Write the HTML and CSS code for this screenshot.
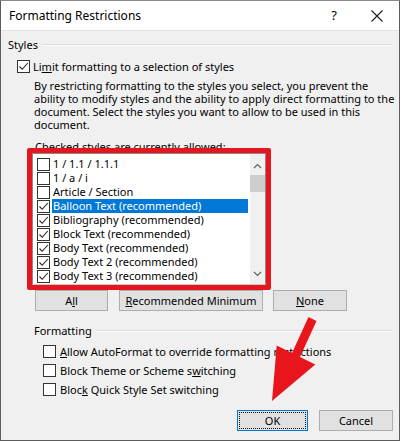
FILE: index.html
```html
<!DOCTYPE html>
<html>
<head>
<meta charset="utf-8">
<title>Formatting Restrictions</title>
<link rel="stylesheet" href="styles.css">
</head>
<body>
<div class="window">
  <div class="titlebar">
    <span class="title">Formatting Restrictions</span>
    <span class="help">?</span>
    <svg class="close" width="12" height="12" viewBox="0 0 12 12"><path d="M0.5 0.5L11.5 11.5M11.5 0.5L0.5 11.5" stroke="#1a1a1a" stroke-width="1.1" fill="none"/></svg>
  </div>
  <div class="content">
    <div class="group-head"><span>Styles</span><i class="rule"></i></div>
    <div class="check-row limit">
      <span class="cb"><svg width="11" height="11" viewBox="0 0 11 11"><path d="M1.5 5.5L4.2 8.3L9.8 2" stroke="#222" stroke-width="1.1" fill="none"/></svg></span>
      <span>Li<u>m</u>it formatting to a selection of styles</span>
    </div>
    <p class="desc">By restricting formatting to the styles you select, you prevent the<br>ability to modify styles and the ability to apply direct formatting to the<br>document. Select the styles you want to allow to be used in this<br>document.</p>
    <div class="list-label">Checked styles are currently allowed:</div>
    <div class="highlight">
      <div class="listbox">
        <ul class="items">
          <li><span class="cb"></span><span class="txt">1 / 1.1 / 1.1.1</span></li>
          <li><span class="cb"></span><span class="txt">1 / a / i</span></li>
          <li><span class="cb"></span><span class="txt">Article / Section</span></li>
          <li class="sel"><span class="cb"><svg width="11" height="11" viewBox="0 0 11 11"><path d="M1.5 5.5L4.2 8.3L9.8 2" stroke="#222" stroke-width="1.1" fill="none"/></svg></span><span class="txt">Balloon Text (recommended)</span></li>
          <li><span class="cb"><svg width="11" height="11" viewBox="0 0 11 11"><path d="M1.5 5.5L4.2 8.3L9.8 2" stroke="#222" stroke-width="1.1" fill="none"/></svg></span><span class="txt">Bibliography (recommended)</span></li>
          <li><span class="cb"><svg width="11" height="11" viewBox="0 0 11 11"><path d="M1.5 5.5L4.2 8.3L9.8 2" stroke="#222" stroke-width="1.1" fill="none"/></svg></span><span class="txt">Block Text (recommended)</span></li>
          <li><span class="cb"><svg width="11" height="11" viewBox="0 0 11 11"><path d="M1.5 5.5L4.2 8.3L9.8 2" stroke="#222" stroke-width="1.1" fill="none"/></svg></span><span class="txt">Body Text (recommended)</span></li>
          <li><span class="cb"><svg width="11" height="11" viewBox="0 0 11 11"><path d="M1.5 5.5L4.2 8.3L9.8 2" stroke="#222" stroke-width="1.1" fill="none"/></svg></span><span class="txt">Body Text 2 (recommended)</span></li>
          <li><span class="cb"><svg width="11" height="11" viewBox="0 0 11 11"><path d="M1.5 5.5L4.2 8.3L9.8 2" stroke="#222" stroke-width="1.1" fill="none"/></svg></span><span class="txt">Body Text 3 (recommended)</span></li>
        </ul>
        <div class="scrollbar">
          <div class="sb-btn up"><svg width="9" height="6" viewBox="0 0 9 6"><path d="M1 5L4.5 1.5L8 5" stroke="#606060" stroke-width="1.2" fill="none"/></svg></div>
          <div class="thumb"></div>
          <div class="track"></div>
          <div class="sb-btn down"><svg width="9" height="6" viewBox="0 0 9 6"><path d="M1 1L4.5 4.5L8 1" stroke="#606060" stroke-width="1.2" fill="none"/></svg></div>
        </div>
      </div>
    </div>
    <div class="btn-row">
      <button class="btn b-all">A<u>l</u>l</button>
      <button class="btn b-rec"><u>R</u>ecommended Minimum</button>
      <button class="btn b-none"><u>N</u>one</button>
    </div>
    <div class="group-head fmt"><span>Formatting</span><i class="rule"></i></div>
    <div class="fmt-rows">
      <div class="check-row"><span class="cb"></span><span><u>A</u>llow AutoFormat to override formatting restrictions</span></div>
      <div class="check-row"><span class="cb"></span><span>Block Theme or Scheme s<u>w</u>itching</span></div>
      <div class="check-row"><span class="cb"></span><span>Bloc<u>k</u> Quick Style Set switching</span></div>
    </div>
    <div class="footer">
      <button class="btn ok">OK</button>
      <button class="btn cancel">Cancel</button>
    </div>
  </div>
  <svg class="arrow" width="401" height="441" viewBox="0 0 401 441"><polygon points="308.5,317 316.5,321 300,357 315.3,364.5 272,401 276.7,345.5 292,353" fill="#e8161c"/></svg>
</div>
</body>
</html>
```

FILE: styles.css
```css
* { box-sizing: border-box; }
html, body { margin: 0; padding: 0; background: #ffffff; }
body {
  width: 401px;
  height: 441px;
  font-family: "Noto Sans", "Open Sans", sans-serif;
  font-size: 11px;
  color: #000;
  overflow: hidden;
}
.window {
  position: relative;
  width: 400px;
  height: 441px;
  border: 1px solid #5c5c5c;
  border-top-color: #8a8a8a;
  background: #f0f0f0;
  display: flex;
  flex-direction: column;
}
.titlebar {
  height: 30px;
  flex: none;
  background: #fff;
  border-bottom: 1px solid #e4e4e4;
  display: flex;
  align-items: center;
  padding-left: 8px;
  font-size: 12px;
}
.title { flex: 1; }
.help { font-size: 13px; margin-right: 34px; margin-top: -1px; }
.close { margin-right: 16px; }
.content {
  padding: 0 6px 0 7px;
}
.group-head {
  display: flex;
  align-items: center;
  height: 15px;
  line-height: 15px;
  margin-top: 6px;
}
.group-head .rule {
  flex: 1;
  margin-left: 5px;
  height: 2px;
  border-top: 1px solid #d9d9d9;
  border-bottom: 1px solid #fff;
}
.group-head.fmt { margin-top: 12px; margin-left: 26px; }
.cb {
  width: 13px;
  height: 13px;
  flex: none;
  border: 1px solid #333;
  background: #fff;
  display: flex;
  align-items: center;
  justify-content: center;
}
.check-row {
  display: flex;
  align-items: center;
  height: 15px;
  line-height: 15px;
}
.check-row.limit { margin-top: 7px; margin-left: 9px; gap: 3px; }
.desc {
  margin: 5px 0 0 26px;
  line-height: 13px;
  white-space: nowrap;
}
.list-label {
  margin: 8px 0 0 27px;
  height: 15px;
  line-height: 15px;
}
.highlight {
  margin: -6px 0 0 19px;
  width: 244px;
  height: 142px;
  border: 5px solid #e5171e;
  border-radius: 2px;
  position: relative;
}
.listbox {
  width: 234px;
  height: 132px;
  border: 1px solid #8a8a8a;
  border-bottom-color: #c8c8c8;
  background: #fff;
  display: flex;
}
.items {
  list-style: none;
  margin: 0;
  padding: 3px 0 0 4px;
  flex: 1;
}
.items li {
  height: 14px;
  display: flex;
  align-items: center;
  gap: 2px;
  line-height: 14px;
}
.items .txt { padding-left: 1px; flex: 1; margin-right: 2px; }
.items li.sel .txt { background: #0078d7; color: #fff; }
.scrollbar {
  width: 15px;
  flex: none;
  display: flex;
  flex-direction: column;
  background: #f0f0f0;
}
.sb-btn { display: flex; align-items: center; justify-content: center; }
.sb-btn.up { height: 21px; padding-top: 2px; }
.thumb { height: 17px; background: #cdcdcd; }
.track { flex: 1; }
.sb-btn.down { height: 18px; padding-bottom: 2px; }
.btn {
  font-family: inherit;
  font-size: 11px;
  color: #000;
  background: #e1e1e1;
  border: 1px solid #adadad;
  height: 21px;
  padding: 0;
  line-height: 19px;
  border-radius: 0;
}
.btn-row {
  display: flex;
  margin-left: 27px;
  gap: 11px;
}
.b-all { width: 73px; }
.b-rec { width: 144px; }
.b-none { width: 74px; margin-left: -1px; }
.fmt-rows { margin: 4px 0 0 35px; }
.fmt-rows .check-row { height: 19px; gap: 4px; }
.footer {
  display: flex;
  justify-content: flex-end;
  gap: 11px;
  margin-top: 11px;
}
.ok {
  width: 71px;
  border-color: #0078d7;
  outline: 1px dotted #111;
  outline-offset: -3px;
}
.cancel { width: 74px; }
.arrow {
  position: absolute;
  left: -1px;
  top: -1px;
  pointer-events: none;
}
u { text-decoration-thickness: 1px; text-underline-offset: 1px; }
```
